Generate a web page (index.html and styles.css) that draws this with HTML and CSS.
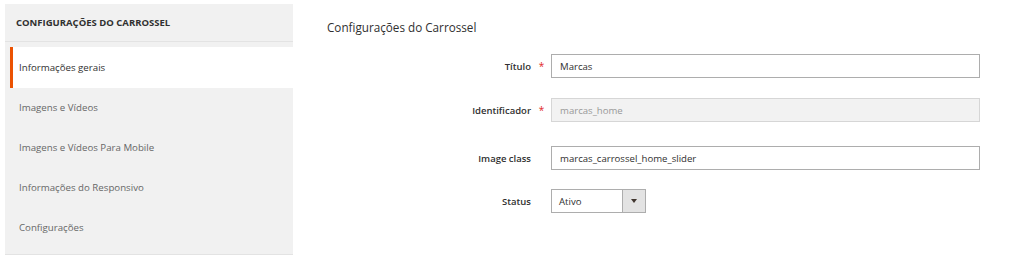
FILE: index.html
```html
<!doctype html>
<html lang="pt-BR">
  <head>
    <meta charset="UTF-8" />
    <meta name="viewport" content="width=device-width, initial-scale=1.0" />
    <title>Configurações do Carrossel</title>
    <link rel="stylesheet" href="styles.css">
  </head>
  <body>
    <div class="page">
      <aside class="page-nav">
        <div class="page-nav-title">Configurações do Carrossel</div>
        <ul class="page-nav-items">
          <li class="page-nav-item active">Informações gerais</li>
          <li class="page-nav-item">Imagens e Vídeos</li>
          <li class="page-nav-item">Imagens e Vídeos Para Mobile</li>
          <li class="page-nav-item">Informações do Responsivo</li>
          <li class="page-nav-item">Configurações</li>
        </ul>
      </aside>

      <main class="content">
        <h1 class="fieldset-title">Configurações do Carrossel</h1>

        <div class="field field-titulo">
          <label class="field-label">Título</label>
          <span class="required">*</span>
          <div class="field-control">
            <input class="input-text" type="text" value="Marcas">
          </div>
        </div>

        <div class="field field-ident">
          <label class="field-label">Identificador</label>
          <span class="required">*</span>
          <div class="field-control">
            <input class="input-text" type="text" value="marcas_home" disabled>
          </div>
        </div>

        <div class="field field-class">
          <label class="field-label">Image class</label>
          <span class="required"></span>
          <div class="field-control">
            <input class="input-text" type="text" value="marcas_carrossel_home_slider">
          </div>
        </div>

        <div class="field field-status">
          <label class="field-label">Status</label>
          <span class="required"></span>
          <div class="field-control">
            <div class="select">
              <span class="select-value">Ativo</span>
              <span class="select-arrow"></span>
            </div>
          </div>
        </div>
      </main>
    </div>
  </body>
</html>
```

FILE: styles.css
```css
* {
  margin: 0;
  padding: 0;
  box-sizing: border-box;
}

body {
  font-family: 'Open Sans', 'Liberation Sans', sans-serif;
  background: #ffffff;
  color: #303030;
  width: 1024px;
  height: 264px;
  overflow: hidden;
}

.page {
  display: flex;
  align-items: flex-start;
  padding: 4px 0 0 5px;
}

/* sidebar */
.page-nav {
  width: 288px;
  background: #f1f1f1;
  border-bottom: 1px solid #e3e3e3;
  padding-bottom: 7px;
}

.page-nav-title {
  height: 38px;
  border-bottom: 1px solid #e3e3e3;
  padding-left: 11px;
  display: flex;
  align-items: center;
  font-size: 9.5px;
  font-weight: 700;
  text-transform: uppercase;
  color: #303030;
  padding-bottom: 1px;
}

.page-nav-items {
  list-style: none;
  padding-top: 5px;
}

.page-nav-item {
  height: 40px;
  margin-left: 5px;
  padding-left: 6px;
  border-left: 3px solid transparent;
  display: flex;
  align-items: center;
  font-size: 9.7px;
  color: #676767;
}

.page-nav-item.active {
  background: #ffffff;
  border-left-color: #eb5202;
  color: #303030;
  margin-right: -1px;
  height: 41px;
  margin-bottom: -1px;
}

/* content */
.content {
  flex: 1;
  padding-left: 34px;
}

.fieldset-title {
  font-size: 11.7px;
  font-weight: 400;
  color: #303030;
  line-height: 18px;
  margin-top: 14px;
}

.field {
  display: grid;
  grid-template-columns: 204px 20px 429px;
  align-items: center;
}

.field-titulo {
  margin-top: 18px;
}

.field-ident {
  margin-top: 20px;
}

.field-class {
  margin-top: 24px;
}

.field-status {
  margin-top: 19px;
}

.field-label {
  text-align: right;
  font-size: 9.5px;
  font-weight: 600;
  color: #303030;
}

.required {
  text-align: center;
  color: #e22626;
  font-size: 10px;
  padding-left: 1px;
}

.input-text {
  display: block;
  width: 100%;
  height: 24px;
  border: 1px solid #adadad;
  background: #ffffff;
  padding: 0 8px;
  font-family: inherit;
  font-size: 9.6px;
  color: #303030;
  outline: none;
}

.input-text:disabled {
  background: #f2f2f2;
  border-color: #d6d6d6;
  color: #999999;
}

.select {
  width: 95px;
  height: 24px;
  border: 1px solid #adadad;
  display: flex;
  align-items: stretch;
  font-size: 9.6px;
  color: #303030;
}

.select-value {
  flex: 1;
  display: flex;
  align-items: center;
  padding-left: 7px;
}

.select-arrow {
  width: 23px;
  background: #e3e3e3;
  border-left: 1px solid #adadad;
  position: relative;
}

.select-arrow::after {
  content: '';
  position: absolute;
  left: 8px;
  top: 9px;
  border-left: 3px solid transparent;
  border-right: 3px solid transparent;
  border-top: 4px solid #41362f;
}
```
